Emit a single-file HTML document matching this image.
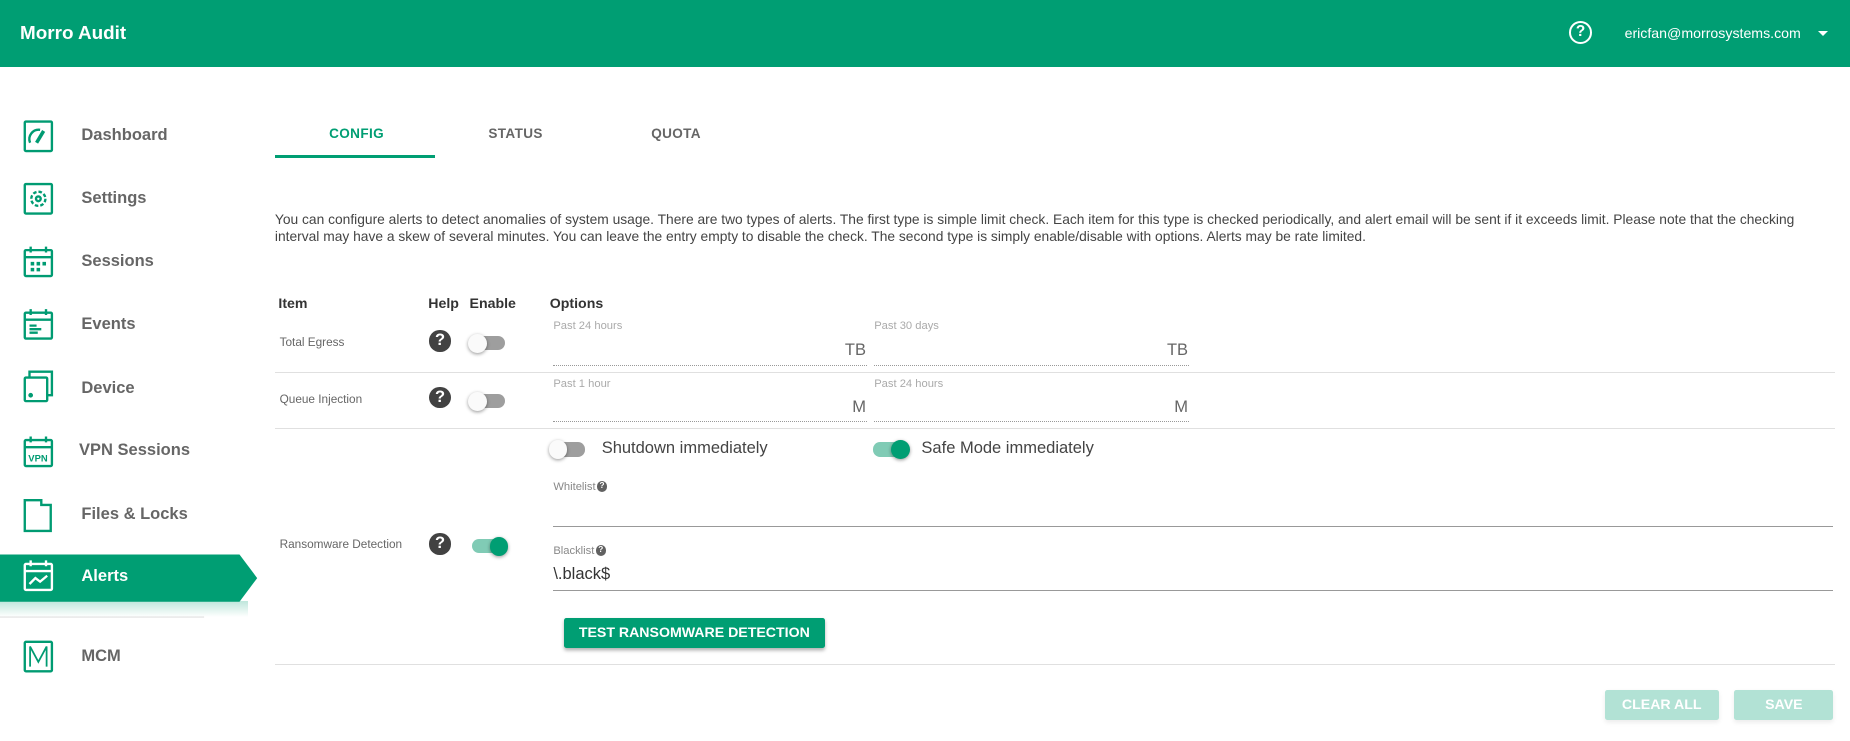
<!DOCTYPE html>
<html><head><meta charset="utf-8"><style>
html,body{margin:0;padding:0;background:#fff;overflow:hidden}
body{width:1568px;height:628px;zoom:1.1798;position:relative;font-family:"Liberation Sans",Arial,sans-serif;color:#333}
.a{position:absolute}
.hdr{left:0;top:0;width:1568px;height:57px;background:#009e73}
.nav{font-size:14px;font-weight:bold;color:#666;left:69px}
.tab{font-size:11.5px;font-weight:bold;color:#666;letter-spacing:.3px}
.lab{font-size:10px;color:#666}
.sep{left:233px;width:1322px;height:1px;background:#e0e0e0}
.fl{font-size:9.5px;color:#aaa}
.dot{height:0;border-bottom:1px dotted #999}
.unit{font-size:14px;color:#666;text-align:right}
.hq{width:18px;height:18px;border-radius:50%;background:#424242;color:#fff;font-size:14px;font-weight:bold;text-align:center;line-height:18px}
.tg{width:30px;height:12px;border-radius:6px;background:#9e9e9e}
.tg i{position:absolute;top:-2px;left:-1px;width:16px;height:16px;border-radius:50%;background:#fafafa;box-shadow:0 1px 3px rgba(0,0,0,.4)}
.tg.on{background:#80cbb5}.tg.on i{left:15px;background:#009e73}
.th{font-size:12px;font-weight:bold;color:#333;top:250px}
.sq{display:inline-block;width:9px;height:9px;border-radius:50%;background:#616161;color:#fff;font-size:7px;font-weight:bold;text-align:center;line-height:9px;vertical-align:top;margin-left:1px}
</style></head><body>
<div class="a hdr"></div>
<div class="a" style="left:17px;top:19px;font-size:16px;font-weight:bold;color:#fff">Morro Audit</div>
<div class="a" style="left:1330px;top:18px;width:16px;height:16px;border:2px solid #fff;border-radius:50%;color:#fff;font-size:13px;font-weight:bold;text-align:center;line-height:16px">?</div>
<div class="a" style="left:1377px;top:21px;font-size:12px;color:#fff">ericfan@morrosystems.com</div>
<div class="a" style="left:1541px;top:26px;width:0;height:0;border-left:4.5px solid transparent;border-right:4.5px solid transparent;border-top:5px solid #fff"></div>

<svg class="a" style="left:0;top:0" width="230" height="628" fill="none" stroke="#009b72" stroke-width="2">
<rect x="21" y="103" width="23" height="25" rx="1"/><path d="M25.5 121A8 8 0 0 1 34 110"/><path d="M31 121l6-10" stroke-width="3"/>
<rect x="21" y="156" width="23" height="25" rx="1"/><circle cx="32.5" cy="168.5" r="2"/><circle cx="32.5" cy="168.5" r="6" stroke-dasharray="3 1.7"/>
<rect x="21" y="212" width="23" height="22" rx="1"/><path d="M21 218h23M26 209v5M39 209v5"/><path d="M26 222h3v3h-3zM31 222h3v3h-3zM36 222h3v3h-3zM26 227h3v3h-3zM31 227h3v3h-3z" fill="#009b72" stroke="none"/>
<rect x="21" y="265" width="23" height="22" rx="1"/><path d="M21 271h23M26 262v5M39 262v5M25 276h6M25 279h10M25 282h7"/>
<rect x="21" y="320" width="19" height="20" rx="1"/><path d="M25 320v-5h19v20h-4"/><circle cx="26" cy="335" r="1" fill="#009b72"/>
<rect x="21" y="373" width="23" height="22" rx="1"/><path d="M21 379h23M26 370v5M39 370v5"/><text x="24" y="391" font-size="8" font-weight="bold" fill="#009b72" stroke="none" font-family="Liberation Sans">VPN</text>
<path d="M21 424h14v4h8v22h-22z"/>
<path d="M0 470h203l15 20-15 20H0z" fill="#009e73" stroke="none"/>
<rect x="21" y="478" width="23" height="22" rx="1" stroke="#fff"/><path d="M21 484h23M26 475v5M39 475v5M25 495l5-5 4 3 6-5" stroke="#fff"/>
<path d="M0 523h173" stroke="#e0e0e0" stroke-width="1"/>
<rect x="21" y="544" width="23" height="25" rx="1"/><path d="M25.5 565v-17l7 13 7-13v17" stroke-width="1.5"/>
</svg>
<div class="a" style="left:0;top:509px;width:210px;height:14px;background:linear-gradient(rgba(0,158,115,.25),rgba(0,158,115,0))"></div>
<div class="a nav" style="top:107px">Dashboard</div>
<div class="a nav" style="top:160px">Settings</div>
<div class="a nav" style="top:214px">Sessions</div>
<div class="a nav" style="top:267px">Events</div>
<div class="a nav" style="top:321px">Device</div>
<div class="a nav" style="top:374px;left:67px">VPN Sessions</div>
<div class="a nav" style="top:428px">Files &amp; Locks</div>
<div class="a nav" style="top:481px;color:#fff">Alerts</div>
<div class="a nav" style="top:548px">MCM</div>

<div class="a tab" style="left:279px;top:107px;color:#009e73">CONFIG</div>
<div class="a tab" style="left:414px;top:107px">STATUS</div>
<div class="a tab" style="left:552px;top:107px">QUOTA</div>
<div class="a" style="left:233px;top:131px;width:136px;height:3px;background:#009e73"></div>

<div class="a" style="left:233px;top:180px;width:1325px;font-size:11.7px;line-height:14px;color:#444">You can configure alerts to detect anomalies of system usage. There are two types of alerts. The first type is simple limit check. Each item for this type is checked periodically, and alert email will be sent if it exceeds limit. Please note that the checking interval may have a skew of several minutes. You can leave the entry empty to disable the check. The second type is simply enable/disable with options. Alerts may be rate limited.</div>

<div class="a th" style="left:236px">Item</div>
<div class="a th" style="left:363px">Help</div>
<div class="a th" style="left:398px">Enable</div>
<div class="a th" style="left:466px">Options</div>

<div class="a lab" style="left:237px;top:285px">Total Egress</div>
<div class="a hq" style="left:364px;top:280px">?</div>
<div class="a tg" style="left:398px;top:285px"><i></i></div>
<div class="a fl" style="left:469px;top:271px">Past 24 hours</div>
<div class="a unit" style="left:469px;top:289px;width:265px">TB</div>
<div class="a dot" style="left:469px;top:309px;width:266px"></div>
<div class="a fl" style="left:741px;top:271px">Past 30 days</div>
<div class="a unit" style="left:741px;top:289px;width:266px">TB</div>
<div class="a dot" style="left:741px;top:309px;width:267px"></div>
<div class="a sep" style="top:315px"></div>

<div class="a lab" style="left:237px;top:333px">Queue Injection</div>
<div class="a hq" style="left:364px;top:328px">?</div>
<div class="a tg" style="left:398px;top:334px"><i></i></div>
<div class="a fl" style="left:469px;top:320px">Past 1 hour</div>
<div class="a unit" style="left:469px;top:337px;width:265px">M</div>
<div class="a dot" style="left:469px;top:357px;width:266px"></div>
<div class="a fl" style="left:741px;top:320px">Past 24 hours</div>
<div class="a unit" style="left:741px;top:337px;width:266px">M</div>
<div class="a dot" style="left:741px;top:357px;width:267px"></div>
<div class="a sep" style="top:363px"></div>

<div class="a lab" style="left:237px;top:456px">Ransomware Detection</div>
<div class="a hq" style="left:364px;top:452px">?</div>
<div class="a tg on" style="left:400px;top:457px"><i></i></div>
<div class="a tg" style="left:466px;top:375px"><i></i></div>
<div class="a" style="left:510px;top:372px;font-size:14px;color:#444">Shutdown immediately</div>
<div class="a tg on" style="left:740px;top:375px"><i></i></div>
<div class="a" style="left:781px;top:372px;font-size:14px;color:#444">Safe Mode immediately</div>
<div class="a fl" style="left:469px;top:408px;color:#888">Whitelist<span class="sq">?</span></div>
<div class="a" style="left:469px;top:446px;width:1085px;height:1px;background:#999"></div>
<div class="a fl" style="left:469px;top:462px;color:#888">Blacklist<span class="sq">?</span></div>
<div class="a" style="left:469px;top:479px;font-size:14px;color:#333">\.black$</div>
<div class="a" style="left:469px;top:500px;width:1085px;height:1px;background:#999"></div>
<div class="a" style="left:478px;top:524px;width:221px;height:25px;background:#009e73;border-radius:2px;box-shadow:0 2px 3px rgba(0,0,0,.3);color:#fff;font-size:12px;font-weight:bold;text-align:center;line-height:25px">TEST RANSOMWARE DETECTION</div>
<div class="a sep" style="top:563px"></div>

<div class="a" style="left:1360px;top:585px;width:97px;height:25px;background:#b2e2d5;border-radius:2px;color:#fff;font-size:12px;font-weight:bold;text-align:center;line-height:25px;box-shadow:0 2px 4px rgba(0,0,0,.08)">CLEAR ALL</div>
<div class="a" style="left:1470px;top:585px;width:84px;height:25px;background:#b2e2d5;border-radius:2px;color:#fff;font-size:12px;font-weight:bold;text-align:center;line-height:25px;box-shadow:0 2px 4px rgba(0,0,0,.08)">SAVE</div>
</body></html>
